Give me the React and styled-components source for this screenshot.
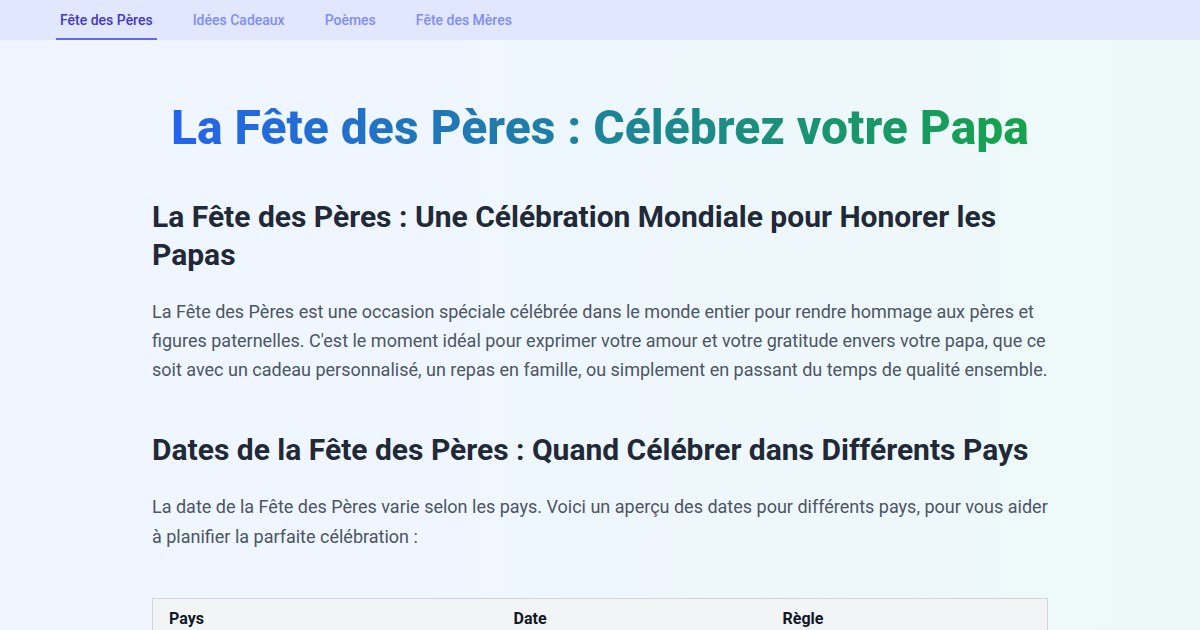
import React from 'react';
import styled, { createGlobalStyle } from 'styled-components';

const GlobalStyle = createGlobalStyle`
  * { box-sizing: border-box; }
  html, body { margin: 0; padding: 0; }
  body {
    font-family: Roboto, 'Liberation Sans', sans-serif;
    background: linear-gradient(to right, #eff6ff 35%, #edf9f8);
    min-height: 100vh;
  }
`;

const Nav = styled.nav`
  height: 40px;
  background: #e0e7ff;
  display: flex;
  align-items: stretch;
  gap: 32px;
  padding-left: 56px;
`;

const Tab = styled.a`
  display: flex;
  align-items: center;
  padding: 2px 4px 0;
  font-size: 14px;
  font-weight: 500;
  text-decoration: none;
  color: ${p => (p.$active ? '#4338ca' : '#818cf8')};
  border-bottom: 2px solid ${p => (p.$active ? '#6366f1' : 'transparent')};
`;

const Main = styled.main`
  max-width: 896px;
  margin: 0 auto;
  padding-top: 64px;
`;

const Title = styled.h1`
  margin: 0 auto 46px;
  width: fit-content;
  text-align: center;
  font-size: 48px;
  line-height: 48px;
  font-weight: 800;
  background: linear-gradient(to right, #2563eb, #16a34a);
  -webkit-background-clip: text;
  background-clip: text;
  color: transparent;
`;

const Section = styled.section`
  margin-bottom: 47px;
`;

const Heading = styled.h2`
  margin: 0 0 23.5px;
  font-size: 30px;
  line-height: 37.5px;
  font-weight: 700;
  color: #1f2937;
`;

const Paragraph = styled.p`
  margin: 0;
  font-size: 18px;
  line-height: 29.25px;
  color: #4b5563;
`;

const Table = styled.table`
  width: 100%;
  border-collapse: collapse;
  table-layout: fixed;
  border: 1px solid #d1d5db;
  background: #ffffff;
`;

const HeadCell = styled.th`
  text-align: left;
  padding: 10px 16px;
  font-size: 16px;
  line-height: 20px;
  font-weight: 700;
  color: #111827;
  background: #f3f4f6;
  border-bottom: 1px solid #d1d5db;
`;

const Cell = styled.td`
  padding: 10px 16px;
  font-size: 16px;
  color: #374151;
  border-top: 1px solid #e5e7eb;
`;

const tabs = ['Fête des Pères', 'Idées Cadeaux', 'Poèmes', 'Fête des Mères'];

const rows = [
  ['France', '15 juin 2025', '3e dimanche de juin'],
  ['Belgique', '8 juin 2025', '2e dimanche de juin'],
  ['Suisse', '1er juin 2025', '1er dimanche de juin'],
  ['Canada', '15 juin 2025', '3e dimanche de juin'],
];

export default function App() {
  return (
    <>
      <GlobalStyle />
      <Nav>
        {tabs.map((t, i) => (
          <Tab key={t} href="#" $active={i === 0}>{t}</Tab>
        ))}
      </Nav>
      <Main>
        <Title>La Fête des Pères : Célébrez votre Papa</Title>
        <Section>
          <Heading>La Fête des Pères : Une Célébration Mondiale pour Honorer les Papas</Heading>
          <Paragraph>
            La Fête des Pères est une occasion spéciale célébrée dans le monde entier pour rendre hommage aux pères et
            figures paternelles. C'est le moment idéal pour exprimer votre amour et votre gratitude envers votre papa, que ce
            soit avec un cadeau personnalisé, un repas en famille, ou simplement en passant du temps de qualité ensemble.
          </Paragraph>
        </Section>
        <Section>
          <Heading>Dates de la Fête des Pères : Quand Célébrer dans Différents Pays</Heading>
          <Paragraph>
            La date de la Fête des Pères varie selon les pays. Voici un aperçu des dates pour différents pays, pour vous aider
            à planifier la parfaite célébration :
          </Paragraph>
        </Section>
        <Table>
          <colgroup>
            <col style={{ width: 345 }} />
            <col style={{ width: 269 }} />
            <col />
          </colgroup>
          <thead>
            <tr>
              <HeadCell>Pays</HeadCell>
              <HeadCell>Date</HeadCell>
              <HeadCell>Règle</HeadCell>
            </tr>
          </thead>
          <tbody>
            {rows.map(r => (
              <tr key={r[0]}>
                {r.map(c => <Cell key={c}>{c}</Cell>)}
              </tr>
            ))}
          </tbody>
        </Table>
      </Main>
    </>
  );
}
